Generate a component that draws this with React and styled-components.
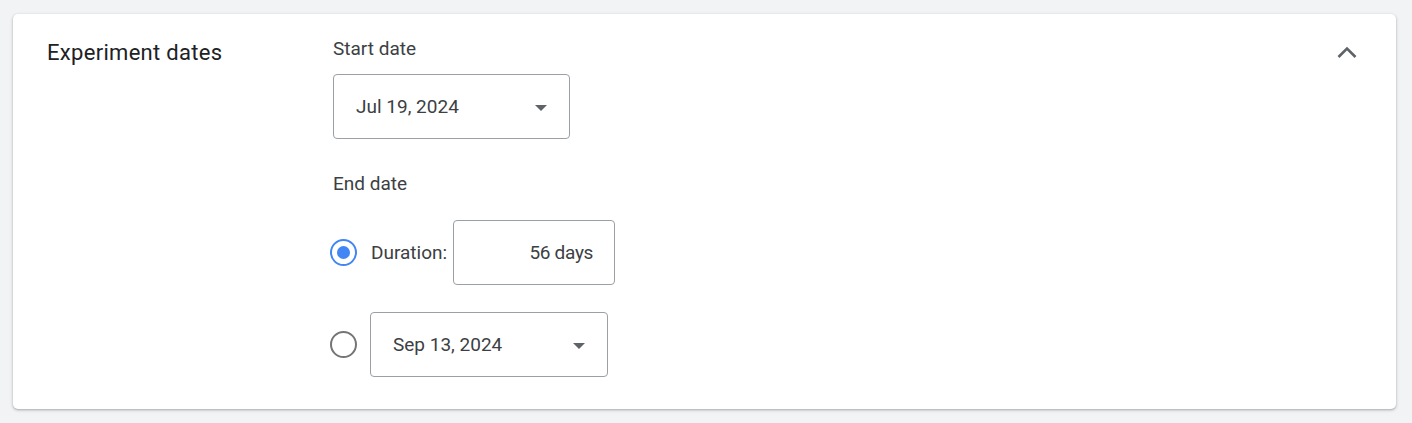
import React, { useState } from "react";
import styled, { createGlobalStyle } from "styled-components";

const GlobalStyle = createGlobalStyle`
  html, body {
    margin: 0;
    background: #f1f3f4;
    font-family: Roboto, "Noto Sans", Arial, sans-serif;
  }
`;

export default function App() {
  const [mode, setMode] = useState("duration");
  return (
    <Page>
      <GlobalStyle />
      <Card>
        <Heading>Experiment dates</Heading>
        <Body>
          <Label>Start date</Label>
          <Select width={237}>
            <span>Jul 19, 2024</span>
            <Caret />
          </Select>
          <Label spaced>End date</Label>
          <Options>
            <Row>
              <Radio checked={mode === "duration"} onClick={() => setMode("duration")} />
              <RowText>Duration:</RowText>
              <NumberBox>56 days</NumberBox>
            </Row>
            <Row>
              <Radio checked={mode === "date"} onClick={() => setMode("date")} />
              <Select width={238}>
                <span>Sep 13, 2024</span>
                <Caret />
              </Select>
            </Row>
          </Options>
        </Body>
        <Toggle aria-label="Collapse">
          <svg width="22" height="14" viewBox="0 0 22 14">
            <path d="M2.5 12 L11 3.5 L19.5 12" fill="none" stroke="#5f6368" strokeWidth="2.6" />
          </svg>
        </Toggle>
      </Card>
    </Page>
  );
}

const Page = styled.div`
  padding: 14px 16px 14px 13px;
`;

const Card = styled.section`
  display: grid;
  grid-template-columns: 286px 1fr auto;
  background: #fff;
  border-radius: 5px;
  box-shadow: 0 1px 2px rgba(60, 64, 67, 0.3), 0 1px 3px 1px rgba(60, 64, 67, 0.1);
  padding: 23px 37px 32px 34px;
`;

const Heading = styled.h2`
  margin: 2px 0 0;
  font-size: 22px;
  line-height: 28px;
  font-weight: 400;
  color: #202124;
  letter-spacing: 0.3px;
`;

const Body = styled.div`
  display: flex;
  flex-direction: column;
  align-items: flex-start;
`;

const Label = styled.div`
  font-size: 19px;
  line-height: 24px;
  color: #3c4043;
  margin-top: ${(p) => (p.spaced ? "33px" : "0")};
  margin-bottom: 13px;
`;

const Select = styled.div`
  box-sizing: border-box;
  width: ${(p) => p.width}px;
  height: 65px;
  border: 1px solid #9aa0a6;
  border-radius: 4px;
  display: flex;
  align-items: center;
  justify-content: space-between;
  padding: 0 22px 0 22px;
  font-size: 19px;
  color: #3c4043;
`;

const Caret = styled.span`
  width: 0;
  height: 0;
  border-left: 6px solid transparent;
  border-right: 6px solid transparent;
  border-top: 6px solid #5f6368;
  margin-top: 2px;
`;

const Options = styled.div`
  display: flex;
  flex-direction: column;
  gap: 27px;
  margin-top: 11px;
  margin-left: -3px;
`;

const Row = styled.div`
  display: flex;
  align-items: center;
`;

const Radio = styled.span`
  box-sizing: border-box;
  width: 27px;
  height: 27px;
  border-radius: 50%;
  border: 2.5px solid ${(p) => (p.checked ? "#4285f4" : "#757575")};
  display: flex;
  align-items: center;
  justify-content: center;
  margin-right: 13px;
  cursor: pointer;
  &::after {
    content: "";
    width: 13px;
    height: 13px;
    border-radius: 50%;
    background: #4285f4;
    display: ${(p) => (p.checked ? "block" : "none")};
  }
`;

const RowText = styled.span`
  font-size: 19px;
  color: #3c4043;
  margin-left: 1px;
  margin-right: 6px;
`;

const NumberBox = styled.div`
  box-sizing: border-box;
  width: 162px;
  height: 65px;
  border: 1px solid #9aa0a6;
  border-radius: 4px;
  display: flex;
  align-items: center;
  justify-content: flex-end;
  padding-right: 21px;
  font-size: 19px;
  color: #3c4043;
  letter-spacing: -0.3px;
`;

const Toggle = styled.button`
  align-self: start;
  background: none;
  border: none;
  padding: 0;
  margin-top: 8px;
  width: 24px;
  display: flex;
  justify-content: center;
  cursor: pointer;
`;
